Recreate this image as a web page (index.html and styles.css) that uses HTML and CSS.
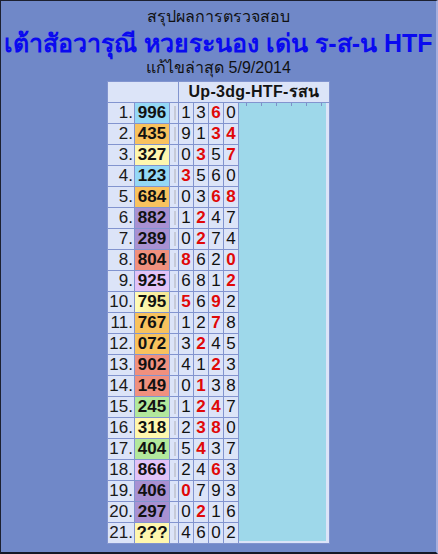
FILE: index.html
```html
<!DOCTYPE html>
<html lang="th">
<head>
<meta charset="utf-8">
<title>สรุปผลการตรวจสอบ</title>
<link rel="stylesheet" href="styles.css">
</head>
<body>
<div class="frame">
  <div class="sub1">สรุปผลการตรวจสอบ</div>
  <div class="title">เต้าสัอวารุณี หวยระนอง เด่น ร-ส-น HTF</div>
  <div class="sub2">แก้ไขล่าสุด 5/9/2014</div>
  <table class="grid">
    <colgroup>
      <col class="c-num"><col class="c-val"><col class="c-sep">
      <col class="c-d"><col class="c-d"><col class="c-d"><col class="c-d">
      <col class="c-blue">
    </colgroup>
    <tr class="head"><th colspan="3"></th><th colspan="5">Up-3dg-HTF-รสน</th></tr>
    <tr><td class="n">1.</td><td class="v lb">996</td><td class="s"><i></i></td><td>1</td><td>3</td><td class="r">6</td><td>0</td><td class="blue" rowspan="21"><div class="blue-in"></div></td></tr>
    <tr><td class="n">2.</td><td class="v or">435</td><td class="s"><i></i></td><td>9</td><td>1</td><td class="r">3</td><td class="r">4</td></tr>
    <tr><td class="n">3.</td><td class="v ly">327</td><td class="s"><i></i></td><td>0</td><td class="r">3</td><td>5</td><td class="r">7</td></tr>
    <tr><td class="n">4.</td><td class="v lb">123</td><td class="s"><i></i></td><td class="r">3</td><td>5</td><td>6</td><td>0</td></tr>
    <tr><td class="n">5.</td><td class="v or">684</td><td class="s"><i></i></td><td>0</td><td>3</td><td class="r">6</td><td class="r">8</td></tr>
    <tr><td class="n">6.</td><td class="v pu">882</td><td class="s"><i></i></td><td>1</td><td class="r">2</td><td>4</td><td>7</td></tr>
    <tr><td class="n">7.</td><td class="v pu">289</td><td class="s"><i></i></td><td>0</td><td class="r">2</td><td>7</td><td>4</td></tr>
    <tr><td class="n">8.</td><td class="v sa">804</td><td class="s"><i></i></td><td class="r">8</td><td>6</td><td>2</td><td class="r">0</td></tr>
    <tr><td class="n">9.</td><td class="v lp">925</td><td class="s"><i></i></td><td>6</td><td>8</td><td>1</td><td class="r">2</td></tr>
    <tr><td class="n">10.</td><td class="v yg">795</td><td class="s"><i></i></td><td class="r">5</td><td>6</td><td class="r">9</td><td>2</td></tr>
    <tr><td class="n">11.</td><td class="v or">767</td><td class="s"><i></i></td><td>1</td><td>2</td><td class="r">7</td><td>8</td></tr>
    <tr><td class="n">12.</td><td class="v or">072</td><td class="s"><i></i></td><td>3</td><td class="r">2</td><td>4</td><td>5</td></tr>
    <tr><td class="n">13.</td><td class="v sa">902</td><td class="s"><i></i></td><td>4</td><td>1</td><td class="r">2</td><td>3</td></tr>
    <tr><td class="n">14.</td><td class="v sa">149</td><td class="s"><i></i></td><td>0</td><td class="r">1</td><td>3</td><td>8</td></tr>
    <tr><td class="n">15.</td><td class="v gr">245</td><td class="s"><i></i></td><td>1</td><td class="r">2</td><td class="r">4</td><td>7</td></tr>
    <tr><td class="n">16.</td><td class="v ly">318</td><td class="s"><i></i></td><td>2</td><td class="r">3</td><td class="r">8</td><td>0</td></tr>
    <tr><td class="n">17.</td><td class="v gr">404</td><td class="s"><i></i></td><td>5</td><td class="r">4</td><td>3</td><td>7</td></tr>
    <tr><td class="n">18.</td><td class="v lp">866</td><td class="s"><i></i></td><td>2</td><td>4</td><td class="r">6</td><td>3</td></tr>
    <tr><td class="n">19.</td><td class="v pu">406</td><td class="s"><i></i></td><td class="r">0</td><td>7</td><td>9</td><td>3</td></tr>
    <tr><td class="n">20.</td><td class="v pu">297</td><td class="s"><i></i></td><td>0</td><td class="r">2</td><td>1</td><td>6</td></tr>
    <tr><td class="n">21.</td><td class="v ly">???</td><td class="s"><i></i></td><td>4</td><td>6</td><td>0</td><td>2</td></tr>
  </table>
</div>
</body>
</html>
```

FILE: styles.css
```css
html, body {
  margin: 0;
  padding: 0;
}
body {
  width: 438px;
  height: 554px;
  overflow: hidden;
  font-family: "Liberation Sans", "DejaVu Sans", sans-serif;
  color: #111;
}
.frame {
  box-sizing: border-box;
  width: 438px;
  height: 554px;
  background: #7088c8;
  border-top: 1px solid #1c2030;
  border-left: 1px solid #1c2030;
  border-bottom: 2px solid #141826;
  border-right: 2px solid #a4aede;
  padding-top: 4px;
  text-align: center;
}
.sub1 {
  font-size: 16px;
  line-height: 24px;
  color: #111;
}
.title {
  font-size: 25px;
  font-weight: bold;
  line-height: 28px;
  color: #0a0af0;
  white-space: nowrap;
}
.sub2 {
  font-size: 16px;
  line-height: 21px;
  color: #111;
}
.grid {
  margin: 3px auto 0;
  border-collapse: separate;
  border-spacing: 1px;
  background: #8294cf;
  table-layout: fixed;
  width: 223px;
}
.c-num { width: 26px; }
.c-val { width: 34px; }
.c-sep { width: 8px; }
.c-d { width: 14px; }
.c-blue { width: 90px; }
.grid th,
.grid td {
  padding: 0;
  height: 20px;
  background: #dce4f8;
  font-size: 17px;
  line-height: 20px;
  text-align: center;
}
.grid th {
  font-size: 16px;
  font-weight: bold;
  color: #141414;
  white-space: nowrap;
  letter-spacing: 0.3px;
}
.grid td.n {
  text-align: right;
  padding-right: 1px;
  color: #1a1a1a;
}
.grid td.v {
  font-weight: bold;
  font-size: 17px;
  color: #111;
}
.grid td.r {
  color: #e00808;
  font-weight: bold;
  font-size: 17px;
}
.grid td.s {
  text-align: left;
}
.grid td.s i {
  display: block;
  width: 2px;
  height: 14px;
  margin-left: 4px;
  background: #c6cad8;
}
.lb { background: #94d8f6 !important; }
.or { background: #f8c25e !important; }
.ly { background: #fff7ae !important; }
.pu { background: #a891d2 !important; }
.sa { background: #f0907e !important; }
.lp { background: #e2c2f8 !important; }
.gr { background: #b2e89c !important; }
.yg { background: linear-gradient(90deg, #fffcb8, #f6e690) !important; }
.grid td.blue {
  vertical-align: top;
  padding: 0 3px 2px 0;
  height: auto;
}
.blue-in {
  height: 438px;
  background:
    repeating-linear-gradient(90deg, transparent 0 7px, #7e90c8 7px 8px, transparent 8px 15px) top left / 100% 3px no-repeat,
    #9ed8ea;
}
```
